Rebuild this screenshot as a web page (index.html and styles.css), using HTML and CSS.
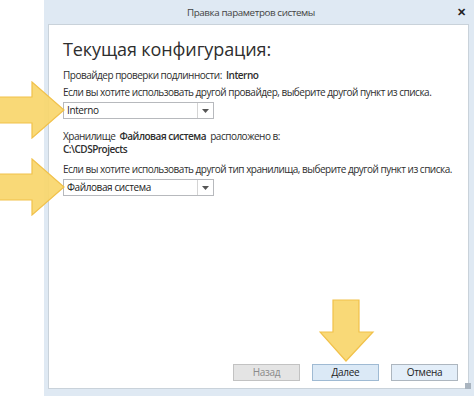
FILE: index.html
```html
<!DOCTYPE html>
<html lang="ru">
<head>
<meta charset="utf-8">
<link rel="stylesheet" href="styles.css">
</head>
<body>
<div class="window">
  <div class="titlebar">
    <span class="title">Правка параметров системы</span>
    <span class="close">✕</span>
  </div>
  <div class="panel">
    <h1 class="heading">Текущая конфигурация:</h1>
    <p class="line l1">Провайдер проверки подлинности:&nbsp; <b>Interno</b></p>
    <p class="line l2">Если вы хотите использовать другой провайдер, выберите другой пункт из списка.</p>
    <div class="select"><span class="value">Interno</span><span class="drop"><svg width="7" height="4" viewBox="0 0 7 4"><path d="M0 0H7L3.5 4Z" fill="#555"/></svg></span></div>
    <p class="line l3">Хранилище&nbsp; <b>Файловая система</b>&nbsp; расположено в:</p>
    <p class="line l4"><b>C:\CDSProjects</b></p>
    <p class="line l5">Если вы хотите использовать другой тип хранилища, выберите другой пункт из списка.</p>
    <div class="select"><span class="value">Файловая система</span><span class="drop"><svg width="7" height="4" viewBox="0 0 7 4"><path d="M0 0H7L3.5 4Z" fill="#555"/></svg></span></div>
    <div class="buttons">
      <button class="btn disabled">Назад</button>
      <button class="btn primary">Далее</button>
      <button class="btn">Отмена</button>
    </div>
  </div>
  <div class="grip"></div>
</div>

<svg class="arrow arrow-1" width="66" height="58" viewBox="0 0 66 58">
  <path d="M-2 16H32V1L64 29L32 57V42H-2Z" fill="#f9d66b" fill-opacity="0.92" stroke="#f1c14a" stroke-width="1.2"/>
</svg>
<svg class="arrow arrow-2" width="66" height="58" viewBox="0 0 66 58">
  <path d="M-2 16H32V1L64 29L32 57V42H-2Z" fill="#f9d66b" fill-opacity="0.92" stroke="#f1c14a" stroke-width="1.2"/>
</svg>
<svg class="arrow arrow-3" width="56" height="64" viewBox="0 0 56 64">
  <path d="M14 1H40V33H54L27 62L1 33H14Z" fill="#f9d66b" fill-opacity="0.92" stroke="#f1c14a" stroke-width="1.2"/>
</svg>
</body>
</html>
```

FILE: styles.css
```css
html, body {
  margin: 0;
  padding: 0;
  background: #ffffff;
  overflow: hidden;
}
body {
  width: 474px;
  height: 396px;
  position: relative;
  font-family: "Open Sans", "Noto Sans", sans-serif;
  color: #2e2e2e;
}
.window {
  margin-left: 44px;
  width: 440px;
  height: 410px;
  background: #dfe9f3;
  display: flex;
  flex-direction: column;
  position: relative;
}
.titlebar {
  height: 24px;
  position: relative;
  display: flex;
  align-items: center;
  justify-content: center;
}
.title {
  font-size: 9.8px;
  color: #444;
  margin-left: -26px;
  letter-spacing: -0.4px;
}
.close {
  position: absolute;
  left: 413px;
  top: 4px;
  font-size: 11px;
  font-weight: bold;
  color: #222;
}
.panel {
  margin-left: 4px;
  width: 421px;
  height: 365px;
  background: #fff;
  border: 1px solid #c9d2da;
  box-sizing: border-box;
  display: flex;
  flex-direction: column;
  padding: 0 10px 7px 14px;
}
.heading {
  margin: 11px 0 0 0;
  font-size: 18px;
  font-weight: normal;
  line-height: 26px;
  color: #2e2e2e;
  letter-spacing: -0.1px;
}
.line {
  margin: 0;
  font-size: 10px;
  line-height: 14px;
  letter-spacing: -0.5px;
  color: #2e2e2e;
  white-space: nowrap;
}
.line b { font-weight: 600; }
.l1 { margin-top: 6px; }
.l2 { margin-top: 3px; }
.l3 { margin-top: 11px; line-height: 13px; }
.l4 { line-height: 13px; }
.l5 { margin-top: 6px; }
.select {
  margin-top: 3px;
  width: 151px;
  height: 17px;
  box-sizing: border-box;
  border: 1px solid #b7b9bd;
  display: flex;
  align-items: stretch;
  font-size: 10px;
  letter-spacing: -0.4px;
}
.value {
  flex: 1;
  padding-left: 3px;
  line-height: 15px;
  color: #222;
}
.drop {
  width: 15px;
  border-left: 1px solid #d4d4d4;
  display: flex;
  align-items: center;
  justify-content: center;
}
.buttons {
  margin-top: auto;
  display: flex;
  justify-content: flex-end;
  gap: 12px;
}
.btn {
  width: 67px;
  height: 17px;
  box-sizing: border-box;
  font-family: "Open Sans", "Noto Sans", sans-serif;
  font-size: 10px;
  letter-spacing: -0.3px;
  padding: 0;
  border: 1px solid #adb6bf;
  background: #e3eef9;
  color: #222;
  line-height: 15px;
}
.btn.disabled {
  background: #e4e4e4;
  border-color: #c2c2c2;
  color: #8a8a8a;
}
.btn.primary {
  background: #dbe9f6;
  border-color: #9fbad3;
}
.grip {
  position: absolute;
  left: 421px;
  top: 383px;
  width: 6px;
  height: 6px;
  background-image: radial-gradient(circle, #a9b4bf 0.8px, transparent 1px);
  background-size: 2px 2px;
}
.arrow {
  position: absolute;
}
.arrow-1 { left: 0; top: 81px; }
.arrow-2 { left: 0; top: 158px; }
.arrow-3 { left: 319px; top: 299px; }
```
